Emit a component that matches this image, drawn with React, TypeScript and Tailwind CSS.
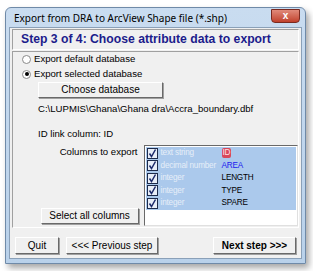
import React from "react";

const rows = [
  { type: "text string", name: "ID", color: "text-[#ffe0e4] bg-[#d8485a] rounded-[2px] px-[1px]" },
  { type: "decimal number", name: "AREA", color: "text-[#1a1aee]" },
  { type: "integer", name: "LENGTH", color: "text-black" },
  { type: "integer", name: "TYPE", color: "text-black" },
  { type: "integer", name: "SPARE", color: "text-black" },
];

function Btn({ children, className = "", bold = false }: { children: React.ReactNode; className?: string; bold?: boolean }) {
  return (
    <div
      className={`flex items-center justify-center bg-[#f0f0f0] border border-t-white border-l-white border-r-[#696969] border-b-[#696969] shadow-[1px_1px_0_#a0a0a0] text-[10px] leading-none text-black ${bold ? "font-bold" : ""} ${className}`}
    >
      {children}
    </div>
  );
}

function Radio({ checked }: { checked?: boolean }) {
  return (
    <div className="w-[9px] h-[9px] rounded-full border border-[#8a8a8a] bg-white flex items-center justify-center">
      {checked && <div className="w-[4px] h-[4px] rounded-full bg-black" />}
    </div>
  );
}

function Check() {
  return (
    <div className="w-[11px] h-[11px] border border-[#1c2a4a] bg-[#e8eef8] flex items-center justify-center shrink-0">
      <svg width="9" height="9" viewBox="0 0 9 9">
        <path d="M1.5 4.5 L3.5 7.5 L7.5 0.5" stroke="#1c2a6a" strokeWidth="1.5" fill="none" />
      </svg>
    </div>
  );
}

export default function App() {
  return (
    <div className="w-[313px] h-[271px] bg-white pt-[7px] pl-[5px] overflow-hidden" style={{ fontFamily: '"Liberation Sans", Arial, sans-serif' }}>
      <div className="w-[301px] h-[257px] rounded-t-[6px] bg-gradient-to-b from-[#c9dcf0] to-[#b9d1ea] border border-[#6f8aa8] shadow-[3px_4px_6px_rgba(0,0,0,0.35)] flex flex-col px-[3px] pb-[4px]">
        <div className="h-[19px] flex items-center justify-between shrink-0">
          <span className="pl-[5px] pt-[1px] text-[10px] leading-none text-black" style={{ fontFamily: '"Noto Sans", "Open Sans", sans-serif' }}>
            Export from DRA to ArcView Shape file (*.shp)
          </span>
          <div className="w-[29px] h-[14px] -mt-[4px] mr-[2px] rounded-b-[4px] bg-gradient-to-b from-[#e08a7a] to-[#c0402c] border border-[#7a2a20] flex items-center justify-center text-white text-[10px] font-bold leading-none">
            x
          </div>
        </div>
        <div className="flex-1 bg-[#f0f0f0] border border-[#8aa0b8] flex flex-col px-[1px] pt-[1px]">
          <div className="h-[21px] mx-[1px] border border-t-[#a0a0a0] border-l-[#a0a0a0] border-b-white border-r-white flex items-center pl-[8px]">
            <span className="text-[12.2px] font-bold text-[#1c1c8c] leading-none whitespace-nowrap">Step 3 of 4: Choose attribute data to export</span>
          </div>
          <div className="h-[177px] mx-[1px] mt-[1px] border border-t-[#a0a0a0] border-l-[#a0a0a0] border-b-white border-r-white flex flex-col text-[9.6px] leading-[12px] text-black">
            <div className="flex items-center gap-[3px] pl-[9px] mt-[1px] h-[12px]">
              <Radio />
              <span>Export default database</span>
            </div>
            <div className="flex items-center gap-[3px] pl-[9px] mt-[3px] h-[12px]">
              <Radio checked />
              <span>Export selected database</span>
            </div>
            <Btn className="ml-[25px] mt-[2px] w-[125px] h-[16px]">Choose database</Btn>
            <div className="ml-[25px] mt-[5px] h-[12px]">C:\LUPMIS\Ghana\Ghana dra\Accra_boundary.dbf</div>
            <div className="ml-[25px] mt-[13px] h-[12px]">ID link column: ID</div>
            <div className="flex mt-[5px]">
              <div className="w-[131px] flex flex-col items-end justify-between pr-[6px] pb-[2px]">
                <span className="mt-[1px]">Columns to export</span>
                <Btn className="w-[98px] h-[16px] mr-[-1px]">Select all columns</Btn>
              </div>
              <div className="w-[155px] h-[81px] bg-white border border-t-[#696969] border-l-[#696969] border-b-[#e0e0e0] border-r-[#e0e0e0] pl-[1px] pt-[1px] pr-[1px] text-[8.2px] tracking-[-0.2px]">
                {rows.map((r) => (
                  <div key={r.name} className="flex items-center h-[12.5px] bg-[#abc9ec] pl-[1px]">
                    <Check />
                    <div className="flex-1 flex items-center pl-[3px]">
                      <span className="w-[61px] text-[#e6eef8] whitespace-nowrap">{r.type}</span>
                      <span className={`${r.color} leading-[10px]`}>{r.name}</span>
                    </div>
                  </div>
                ))}
              </div>
            </div>
          </div>
          <div className="flex items-center mt-[9px] px-[4px]">
            <Btn className="w-[44px] h-[17px]">Quit</Btn>
            <Btn className="w-[92px] h-[17px] ml-[7px]">&lt;&lt;&lt; Previous step</Btn>
            <div className="flex-1" />
            <Btn className="w-[83px] h-[17px]" bold>Next step &gt;&gt;&gt;</Btn>
          </div>
        </div>
      </div>
    </div>
  );
}
